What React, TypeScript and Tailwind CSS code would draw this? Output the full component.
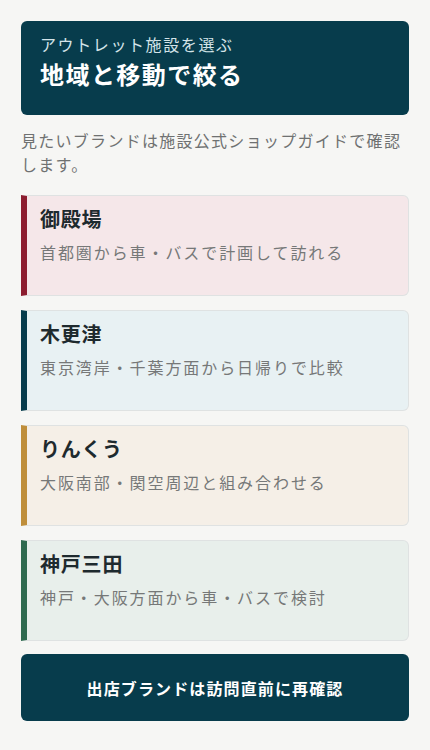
import React from 'react';

// Outlet areas shown as picker cards
interface Area {
  name: string;
  note: string;
  bar: string;
  bg: string;
}

const areas: Area[] = [
  { name: '御殿場', note: '首都圏から車・バスで計画して訪れる', bar: 'border-l-[#8c1d2f]', bg: 'bg-[#f5e7e9]' },
  { name: '木更津', note: '東京湾岸・千葉方面から日帰りで比較', bar: 'border-l-[#073c4c]', bg: 'bg-[#e8f1f3]' },
  { name: 'りんくう', note: '大阪南部・関空周辺と組み合わせる', bar: 'border-l-[#bf8e3a]', bg: 'bg-[#f5efe7]' },
  { name: '神戸三田', note: '神戸・大阪方面から車・バスで検討', bar: 'border-l-[#2f6a4f]', bg: 'bg-[#e8efeb]' },
];

const App: React.FC = () => {
  return (
    <div
      className="min-h-[750px] bg-[#f6f6f4] px-[21px] pt-[21px] pb-6"
      style={{ fontFamily: '"Noto Sans CJK JP", "Noto Sans", sans-serif' }}
    >
      {/* Header */}
      <div className="rounded-md bg-[#073c4c] px-[19px] pt-[12px] pb-[25px]">
        <p className="text-[16px] leading-[22px] tracking-[0.1em] text-[#d3e3e8]">アウトレット施設を選ぶ</p>
        <h1 className="mt-[3px] text-[24px] leading-[32px] font-bold tracking-[0.06em] text-white">地域と移動で絞る</h1>
      </div>

      <p className="mt-[13px] text-[16px] leading-[24px] tracking-[0.08em] text-[#6f7171]">
        見たいブランドは施設公式ショップガイドで確認します。
      </p>

      {/* Area cards */}
      <div className="mt-[19px] flex flex-col gap-[14px]">
        {areas.map(area => (
          <div
            key={area.name}
            className={`rounded-r-md border border-[#dfe2e2] border-l-[6px] ${area.bar} ${area.bg} pl-[13px] pt-[9px] pb-[31px]`}
          >
            <h2 className="text-[20px] leading-[28px] font-bold tracking-[0.04em] text-[#1e2a2e]">{area.name}</h2>
            <p className="mt-[7px] text-[16px] leading-[24px] tracking-[0.12em] text-[#767878]">{area.note}</p>
          </div>
        ))}
      </div>

      <button className="mt-[13px] flex h-[67px] w-full items-center justify-center rounded-md bg-[#073c4c] text-[16px] font-bold tracking-[0.07em] text-white">
        出店ブランドは訪問直前に再確認
      </button>
    </div>
  );
};

export default App;
